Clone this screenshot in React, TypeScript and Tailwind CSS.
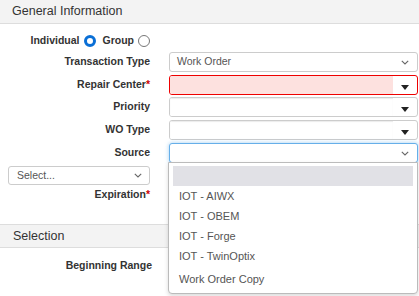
import React from "react";

function Chevron() {
  return (
    <svg width="8" height="5" viewBox="0 0 8 5" className="shrink-0">
      <path d="M0.8 0.8 L4 4 L7.2 0.8" fill="none" stroke="#666" strokeWidth="1.1" />
    </svg>
  );
}

function Caret() {
  return (
    <svg width="8" height="5" viewBox="0 0 8 5" className="shrink-0">
      <path d="M0 0 H8 L4 5 Z" fill="#222" />
    </svg>
  );
}

function Row({ label, req, children, top }: { label: string; req?: boolean; children: React.ReactNode; top: string }) {
  return (
    <div className={`flex items-center h-[20px] ${top}`}>
      <div className="w-[150px] text-right text-[10.5px] font-bold text-[#333]">
        {label}
        {req && <span className="text-[#c00]">*</span>}
      </div>
      <div className="ml-[19px] w-[249px] h-full">{children}</div>
    </div>
  );
}

function Combo({ error }: { error?: boolean }) {
  return (
    <div
      className={`flex h-full rounded-[3px] border ${
        error ? "border-[#e00]" : "border-[#ccc]"
      } bg-white overflow-hidden`}
    >
      <div
        className={`flex-1 ${
          error ? "bg-[#fde1df]" : "bg-white shadow-[inset_0_1px_1px_rgba(0,0,0,0.08)]"
        }`}
      ></div>
      <div className="w-[24px] flex items-end justify-center pb-[4px]">
        <Caret />
      </div>
    </div>
  );
}

export default function App() {
  const items = ["IOT - AIWX", "IOT - OBEM", "IOT - Forge", "IOT - TwinOptix"];
  return (
    <div
      className="relative w-[419px] h-[296px] overflow-hidden bg-white"
      style={{ fontFamily: '"Liberation Sans", Arial, sans-serif' }}
    >
      <div className="h-[24px] bg-[#f3f3f3] border-b border-[#ddd] px-[12px] flex items-center text-[12.5px] text-[#333]">
        General Information
      </div>

      <div className="flex items-center h-[20px] mt-[7px]">
        <div className="w-[150px] flex items-center justify-end gap-[4px] text-[10.5px] font-bold text-[#333]">
          <span>Individual</span>
          <span className="w-[12px] h-[12px] rounded-full border-[3px] border-[#0a6fd6] bg-white mr-[3px]"></span>
          <span>Group</span>
          <span className="w-[12px] h-[12px] rounded-full border border-[#777] bg-white"></span>
        </div>
      </div>

      <Row label="Transaction Type" top="mt-[1px]">
        <div className="flex items-center h-full rounded-[3px] border border-[#ccc] bg-white pl-[7px] pr-[8px] text-[10.5px] text-[#555]">
          <span className="flex-1">Work Order</span>
          <Chevron />
        </div>
      </Row>
      <Row label="Repair Center" req top="mt-[3px]">
        <Combo error />
      </Row>
      <Row label="Priority" top="mt-[2px]">
        <Combo />
      </Row>
      <Row label="WO Type" top="mt-[3px]">
        <Combo />
      </Row>
      <Row label="Source" top="mt-[3px]">
        <div className="flex items-center justify-end h-full rounded-[3px] border border-[#66afe9] shadow-[0_0_4px_rgba(102,175,233,0.6)] bg-white pr-[8px]">
          <Chevron />
        </div>
      </Row>

      <div className="flex items-center mt-[3px] ml-[8px] w-[142px] h-[19px] rounded-[3px] border border-[#ccc] bg-white pl-[8px] pr-[7px] text-[10.5px] text-[#555]">
        <span className="flex-1">Select...</span>
        <Chevron />
      </div>
      <div className="flex items-center h-[16px] mt-[2px]">
        <div className="w-[150px] text-right text-[10.5px] font-bold text-[#333]">
          Expiration<span className="text-[#c00]">*</span>
        </div>
      </div>

      <div className="mt-[21px] h-[24px] bg-[#f3f3f3] border-y border-[#ddd] px-[13px] flex items-center text-[12.5px] text-[#333]">
        Selection
      </div>
      <div className="flex items-center h-[16px] mt-[10px]">
        <div className="w-[152px] text-right text-[10.5px] font-bold text-[#333]">Beginning Range</div>
      </div>

      <div className="absolute left-[168px] top-[162px] w-[250px] h-[132px] bg-white border border-[#bbb] rounded-b-[4px] shadow-[0_2px_4px_rgba(0,0,0,0.15)] pt-[3px] px-[4px]">
        <div className="h-[20px] bg-[#e1e1e6]"></div>
        {items.map((t) => (
          <div key={t} className="h-[20px] flex items-center pl-[6px] text-[11px] text-[#555]">
            {t}
          </div>
        ))}
        <div className="h-[20px] mt-[3px] flex items-center pl-[6px] text-[11px] text-[#555]">
          Work Order Copy
        </div>
      </div>
    </div>
  );
}
